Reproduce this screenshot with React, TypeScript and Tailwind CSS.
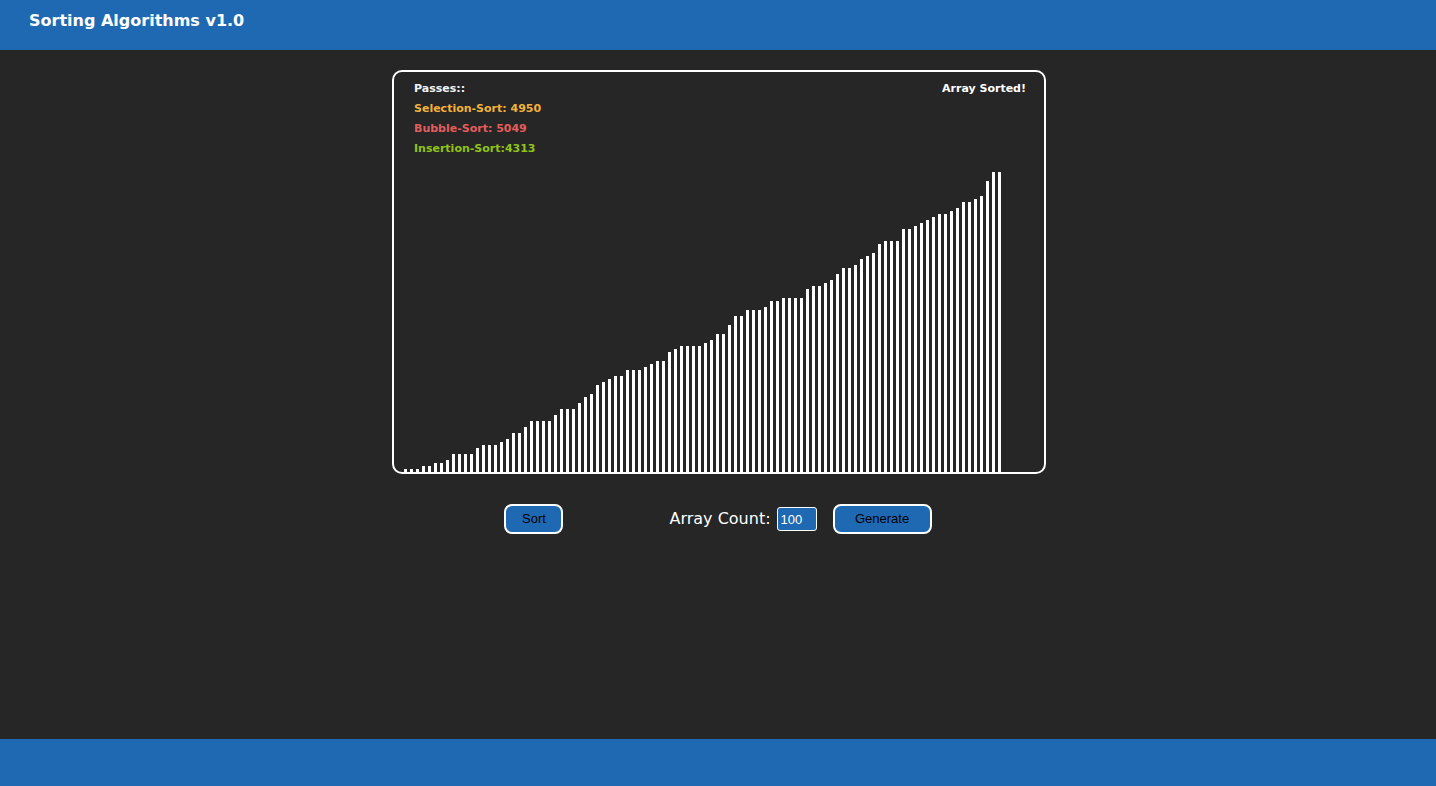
const VALUES = [
  1, 1, 1, 2, 2, 3, 3, 4, 6, 6,
  6, 6, 8, 9, 9, 9, 10, 11, 13, 13,
  15, 17, 17, 17, 17, 19, 21, 21, 21, 23,
  25, 26, 29, 30, 31, 32, 32, 34, 34, 34,
  35, 36, 37, 37, 40, 41, 42, 42, 42, 42,
  43, 44, 46, 46, 49, 52, 52, 54, 54, 54,
  55, 57, 57, 58, 58, 58, 58, 61, 62, 62,
  63, 64, 66, 68, 68, 69, 71, 72, 73, 76,
  77, 77, 77, 81, 81, 82, 83, 84, 85, 86,
  86, 87, 88, 90, 90, 91, 92, 97, 100, 100,
];

export default function App() {
  return (
    <div className="flex min-h-screen flex-col bg-[#262626] font-['DejaVu_Sans',Verdana,sans-serif] text-white">
      <header className="h-[50px] bg-[#1f69b3] pl-[29px] pt-[9px]">
        <h1 className="text-[16px] font-bold">Sorting Algorithms v1.0</h1>
      </header>

      <main className="flex flex-1 flex-col items-center pt-[20px]">
        <div className="relative ml-[2px] flex h-[404px] w-[654px] items-end rounded-[10px] border-2 border-white pl-[10px]">
          <div className="absolute left-[20px] top-[7px] text-[11px] font-bold leading-[20px]">
            <p className="text-[#f2f2f2]">Passes::</p>
            <p className="text-[#f0b23c]">Selection-Sort: 4950</p>
            <p className="text-[#e35d5d]">Bubble-Sort: 5049</p>
            <p className="text-[#8fc31a]">Insertion-Sort:4313</p>
          </div>
          <p className="absolute right-[18px] top-[7px] text-[11px] font-bold leading-[20px]">Array Sorted!</p>

          <div className="flex items-end gap-[3px]">
            {VALUES.map((v, i) => (
              <div key={i} className="w-[3px] bg-white" style={{ height: v * 3 }} />
            ))}
          </div>
        </div>

        <div className="mt-[30px] flex items-center">
          <button
            type="button"
            className="h-[30px] w-[59px] rounded-[8px] border-2 border-white bg-[#1f69b3] font-['Liberation_Sans',Arial,sans-serif] text-[13px] text-black"
          >
            Sort
          </button>
          <span className="ml-[106px] text-[16px]">Array Count:</span>
          <input
            defaultValue="100"
            className="ml-[6px] h-[24px] w-[40px] rounded-[3px] border border-white bg-[#1f69b3] px-[3px] font-['Liberation_Sans',Arial,sans-serif] text-[13px] text-white outline-none"
          />
          <button
            type="button"
            className="ml-[16px] h-[30px] w-[99px] rounded-[8px] border-2 border-white bg-[#1f69b3] font-['Liberation_Sans',Arial,sans-serif] text-[13px] text-black"
          >
            Generate
          </button>
        </div>
      </main>

      <footer className="h-[47px] bg-[#1f69b3]" />
    </div>
  );
}
